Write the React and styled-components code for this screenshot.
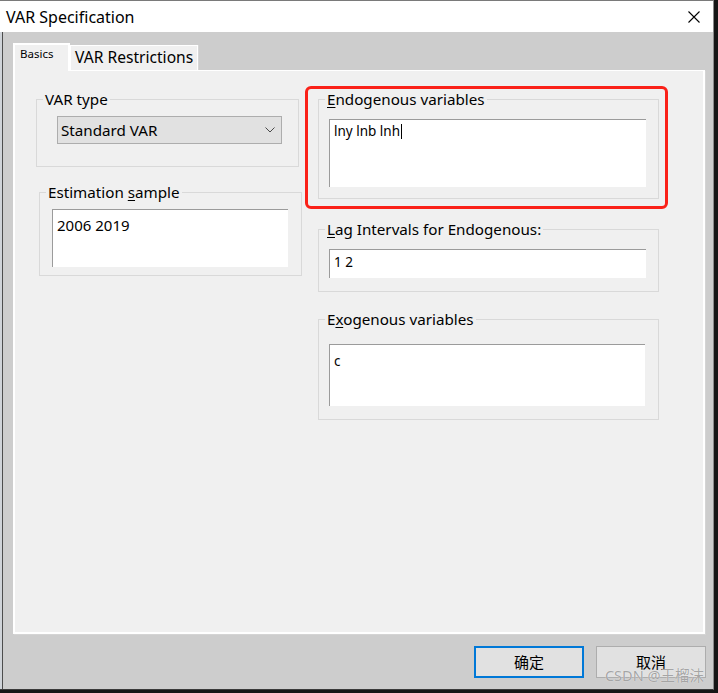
import React from "react";
import styled, { createGlobalStyle } from "styled-components";

const Global = createGlobalStyle`
  html, body { margin: 0; padding: 0; background: #161616; }
  body { font-family: "Noto Sans", "Noto Sans CJK SC", sans-serif; color: #000; }
  * { box-sizing: border-box; }
`;

const Window = styled.div`
  position: relative;
  width: 714px;
  height: 690px;
  display: flex;
  flex-direction: column;
  border-top: 1px solid #7a7a7a;
  border-right: 1px solid #8a8a8a;
  border-bottom: 1px solid #3a3a3a;
  background: #cdcdcd;
`;

const TitleBar = styled.div`
  height: 31px;
  flex: none;
  display: flex;
  align-items: center;
  justify-content: space-between;
  padding: 0 13px 0 6px;
  background: #fff;
  font-size: 16px;
  line-height: 20px;
`;

const Body = styled.div`
  flex: 1;
  display: flex;
  flex-direction: column;
  padding: 11px 8px 11px 13px;
  background: linear-gradient(to right, #cfd3d8 0 2px, #4d4d4d 2px 3px, #cdcdcd 3px);
`;

const TabStrip = styled.div`
  height: 27px;
  display: flex;
  align-items: flex-end;
`;

const Tab = styled.div`
  position: relative;
  z-index: 1;
  background: #f0f0f0;
  white-space: nowrap;
  ${(p) =>
    p.$active
      ? `
    width: 57px;
    height: 28px;
    margin-bottom: -1px;
    border: 2px solid #fff;
    border-bottom: none;
    padding: 1px 0 0 5px;
    font-size: 11.5px;
    line-height: 16px;
  `
      : `
    height: 25px;
    border: 1px solid #fff;
    border-bottom: none;
    box-shadow: 1px 0 0 #d6d6d6;
    padding: 1px 4px 0 4px;
    font-size: 15.6px;
    line-height: 20px;
  `}
`;

const Panel = styled.div`
  height: 564px;
  background: #f0f0f0;
  border-top: 1px solid #fff;
  border-left: 2px solid #fff;
  border-right: 2px solid #fff;
  border-bottom: 2px solid #fff;
  box-shadow: 1px 1px 0 #d4d4d4;
  display: grid;
  grid-template-columns: 266px 341px;
  column-gap: 16px;
  align-content: start;
  padding: 18px 0 0 21px;
`;

const Column = styled.div`
  display: flex;
  flex-direction: column;
  align-items: flex-start;
`;

const Group = styled.fieldset`
  margin: ${(p) => p.$mt || 0}px 0 0 ${(p) => p.$ml || 0}px;
  padding: 0;
  width: ${(p) => p.$w}px;
  min-inline-size: 0;
  border: 1px solid #d9d9d9;
`;

const Legend = styled.legend`
  margin-left: 6px;
  padding: 0 2px;
  font-size: 15.2px;
  line-height: 20px;
  color: #000;
  u {
    text-decoration: underline;
    text-underline-offset: 2px;
    text-decoration-thickness: 1px;
  }
`;

const Select = styled.div`
  width: 225px;
  height: 28px;
  margin: 7px 0 22px 20px;
  display: flex;
  align-items: center;
  justify-content: space-between;
  padding: 0 6px 0 3px;
  border: 1px solid #adadad;
  background: #e1e1e1;
  font-size: 15.2px;
  line-height: 20px;
`;

const TextBox = styled.div`
  width: ${(p) => p.$w}px;
  height: ${(p) => p.$h}px;
  margin: ${(p) => p.$m};
  padding: ${(p) => p.$pt}px 4px 0 4px;
  background: #fff;
  border-top: 1px solid #9b9b9b;
  border-left: 1px solid #9b9b9b;
  font-size: ${(p) => p.$fs}px;
  line-height: ${(p) => (p.$fs > 14 ? 20 : 18)}px;
  white-space: pre;
`;

const Caret = styled.span`
  display: inline-block;
  width: 1px;
  height: 15px;
  margin-left: 1px;
  background: #000;
  vertical-align: -3px;
`;

const Highlight = styled.div`
  position: relative;
  &::after {
    content: "";
    position: absolute;
    top: -3px;
    left: -13px;
    right: -9px;
    bottom: -10px;
    border: 3px solid #fa2118;
    border-radius: 6px;
    pointer-events: none;
  }
`;

const Footer = styled.div`
  margin-top: 12px;
  display: flex;
  justify-content: flex-end;
  gap: 12px;
  margin-right: -1px;
`;

const Button = styled.div`
  width: 110px;
  height: 32px;
  display: flex;
  align-items: center;
  justify-content: center;
  background: #e1e1e1;
  border: ${(p) => (p.$default ? "2px solid #0078d7" : "1px solid #adadad")};
  font-family: "Noto Sans CJK SC", sans-serif;
  font-size: 15px;
  line-height: 20px;
  color: #000;
`;

const Watermark = styled.div`
  position: absolute;
  right: 9px;
  bottom: 4px;
  font-family: "Noto Sans", "Noto Sans CJK SC", sans-serif;
  font-size: 14.5px;
  line-height: 20px;
  color: rgba(150, 150, 150, 0.85);
  text-shadow: 0 0 1px rgba(255, 255, 255, 0.9);
  pointer-events: none;
`;

const CloseIcon = () => (
  <svg width="12" height="12" viewBox="0 0 12 12">
    <path d="M0.5 0.5 L11.5 11.5 M11.5 0.5 L0.5 11.5" stroke="#000" strokeWidth="1.1" fill="none" />
  </svg>
);

const Chevron = () => (
  <svg width="10" height="6" viewBox="0 0 10 6">
    <polyline points="0.5,0.5 5,5 9.5,0.5" stroke="#4a4a4a" strokeWidth="1" fill="none" />
  </svg>
);

export default function App() {
  return (
    <>
      <Global />
      <Window>
        <TitleBar>
          <span>VAR Specification</span>
          <CloseIcon />
        </TitleBar>
        <Body>
          <TabStrip>
            <Tab $active>Basics</Tab>
            <Tab>VAR Restrictions</Tab>
          </TabStrip>
          <Panel>
            <Column>
              <Group $w={263}>
                <Legend>VAR type</Legend>
                <Select>
                  <span>Standard VAR</span>
                  <Chevron />
                </Select>
              </Group>
              <Group $w={263} $mt={15} $ml={3}>
                <Legend>
                  Estimation <u>s</u>ample
                </Legend>
                <TextBox $w={236} $h={58} $m="7px 0 8px 12px" $pt={5} $fs={15}>
                  2006 2019
                </TextBox>
              </Group>
            </Column>
            <Column>
              <Highlight>
                <Group $w={341}>
                  <Legend>
                    <u>E</u>ndogenous variables
                  </Legend>
                  <TextBox $w={317} $h={68} $m="10px 0 11px 10px" $pt={2} $fs={13.5}>
                    lny lnb lnh<Caret />
                  </TextBox>
                </Group>
              </Highlight>
              <Group $w={341} $mt={20}>
                <Legend>
                  <u>L</u>ag Intervals for Endogenous:
                </Legend>
                <TextBox $w={317} $h={29} $m="10px 0 13px 10px" $pt={3} $fs={13.5}>
                  1 2
                </TextBox>
              </Group>
              <Group $w={341} $mt={17}>
                <Legend>
                  E<u>x</u>ogenous variables
                </Legend>
                <TextBox $w={316} $h={62} $m="15px 0 13px 10px" $pt={7} $fs={13.5}>
                  c
                </TextBox>
              </Group>
            </Column>
          </Panel>
          <Footer>
            <Button $default>确定</Button>
            <Button>取消</Button>
          </Footer>
        </Body>
        <Watermark>CSDN @王榴沫</Watermark>
      </Window>
    </>
  );
}
